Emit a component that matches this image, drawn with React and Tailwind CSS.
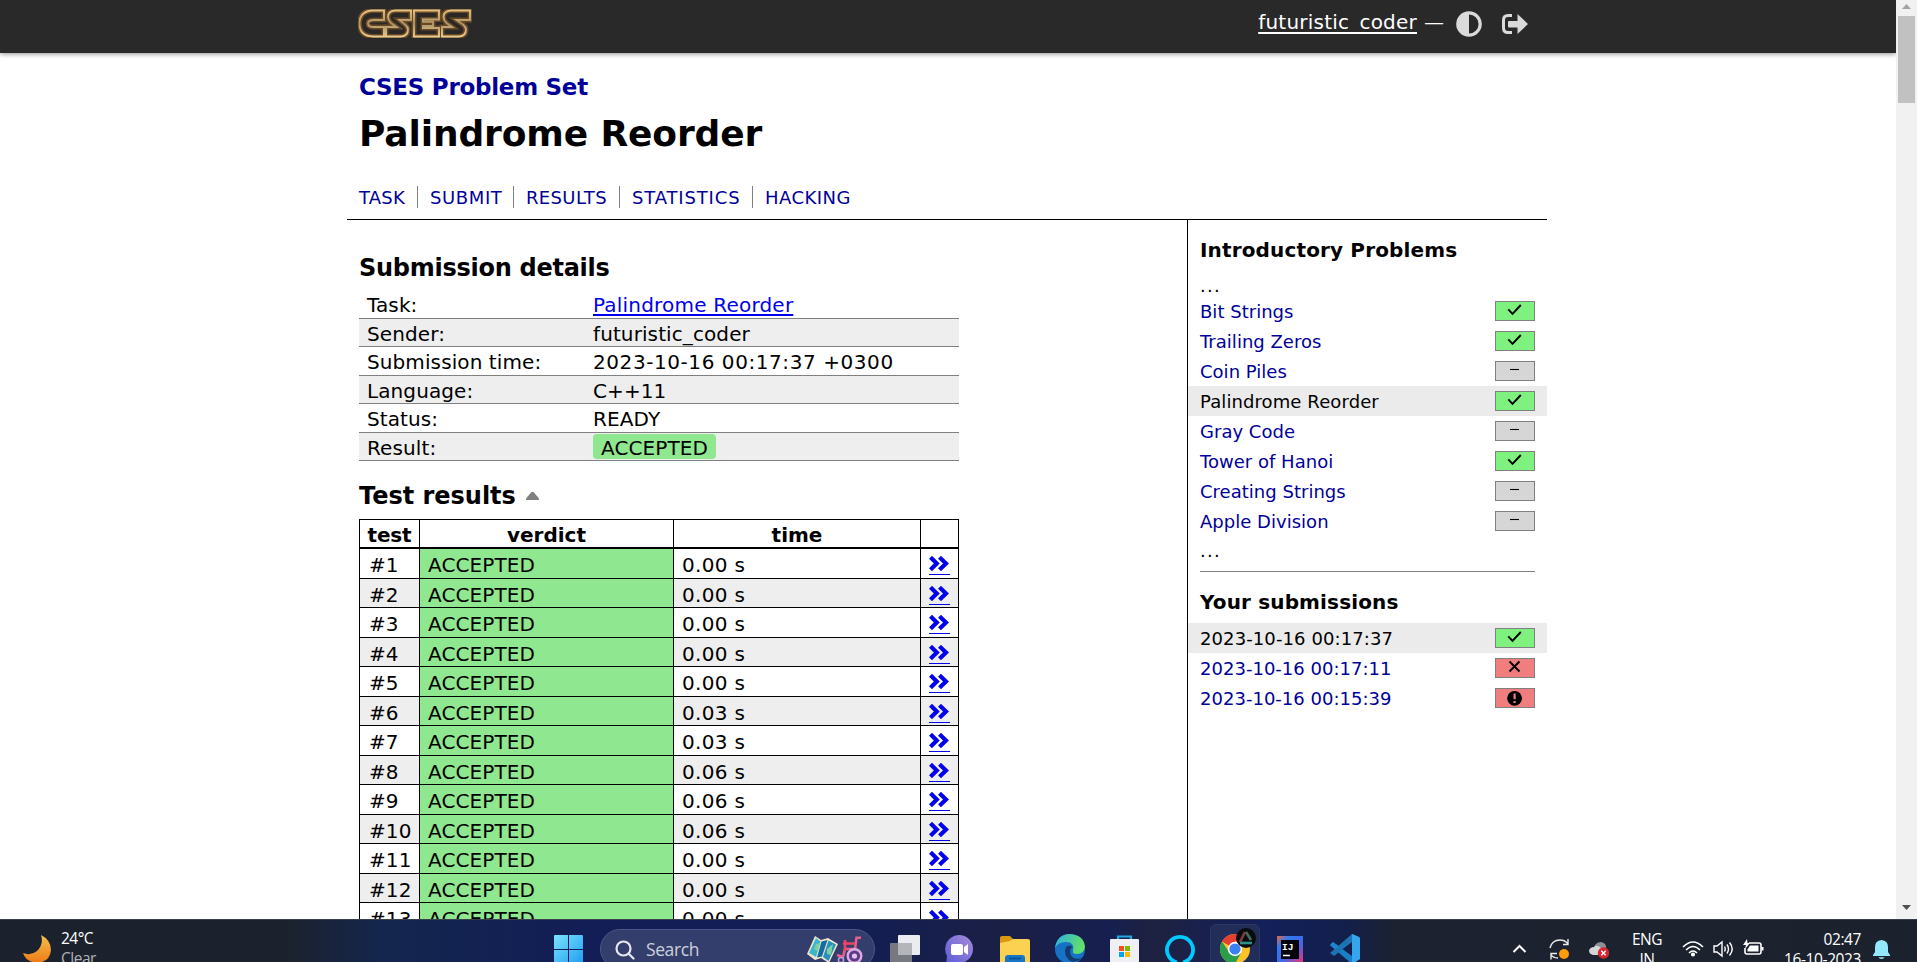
import React from "react";
import clsx from "clsx";

/* ---------- data ---------- */

const tabs = [
  { label: "TASK", box: "w-[59px] pl-0", spacing: "tracking-[0.2px]" },
  { label: "SUBMIT", box: "w-[96px] pl-[12px]", spacing: "tracking-[0.6px]" },
  { label: "RESULTS", box: "w-[106px] pl-[12px]", spacing: "tracking-[0.35px]" },
  { label: "STATISTICS", box: "w-[133px] pl-[12px]", spacing: "tracking-[0.85px]" },
  { label: "HACKING", box: "pl-[12px]", spacing: "tracking-[0.45px]" },
];

const details = [
  { label: "Task:", value: "Palindrome Reorder", kind: "link", h: "h-[29px]" },
  { label: "Sender:", value: "futuristic_coder", h: "h-[28px]" },
  { label: "Submission time:", value: "2023-10-16 00:17:37 +0300", kind: "time", h: "h-[29px]" },
  { label: "Language:", value: "C++11", h: "h-[28px]" },
  { label: "Status:", value: "READY", h: "h-[29px]" },
  { label: "Result:", value: "ACCEPTED", kind: "badge", h: "h-[28px]" },
];

const times = [
  "0.00 s", "0.00 s", "0.00 s", "0.00 s", "0.00 s", "0.03 s", "0.03 s",
  "0.06 s", "0.06 s", "0.06 s", "0.00 s", "0.00 s", "0.00 s",
];

const problems = [
  { name: "Bit Strings", state: "ok" },
  { name: "Trailing Zeros", state: "ok" },
  { name: "Coin Piles", state: "none" },
  { name: "Palindrome Reorder", state: "ok", current: true },
  { name: "Gray Code", state: "none" },
  { name: "Tower of Hanoi", state: "ok" },
  { name: "Creating Strings", state: "none" },
  { name: "Apple Division", state: "none" },
];

const submissions = [
  { name: "2023-10-16 00:17:37", state: "ok", current: true },
  { name: "2023-10-16 00:17:11", state: "fail" },
  { name: "2023-10-16 00:15:39", state: "error" },
];

/* ---------- page icons ---------- */

function Logo() {
  const letters = [
    "M26 1.500H15Q1.500 2 1.500 14.500Q1.500 27 15 27.500H26V18H16Q10 18 10 14.500Q10 11 16 11H26Z",
    "M53 1.500H37Q30 2 30 8Q30 11 33 14L38.500 18H28V27.500H43Q50 27 50 20.500Q50 18 47 15.500L41.500 11H53Z",
    "M56 1.500H81V10.500H65V12.700H75V17H65V19H81V27.500H56Z",
    "M112 1.500H93Q85.500 2 85.500 8Q85.500 11 88.500 14L94 18H84V27.500H101Q108 27 108 20.500Q108 18 105 15.500L98.500 11H112Z",
  ];
  return (
    <svg className="h-[29px] w-[114px]" viewBox="0 0 114 29" fill="none">
      <defs>
        <linearGradient id="gold" x1="0" y1="0" x2="0" y2="1">
          <stop offset="0" stopColor="#e3c184" />
          <stop offset="0.5" stopColor="#ab9468" />
          <stop offset="1" stopColor="#e8cd92" />
        </linearGradient>
      </defs>
      {letters.map((d) => (
        <g key={d}>
          <path d={d} fill="#292827" stroke="#6b4824" strokeWidth="5" />
        </g>
      ))}
      {letters.map((d) => (
        <path key={d} d={d} stroke="url(#gold)" strokeWidth="1.900" />
      ))}
    </svg>
  );
}

function Contrast() {
  return (
    <svg className="h-[26px] w-[26px]" viewBox="0 0 26 26">
      <circle cx="13" cy="13" r="11.200" fill="none" stroke="#dadada" strokeWidth="3.200" />
      <path d="M13 1.500A11.500 11.500 0 0 0 13 24.500Z" fill="#dadada" />
    </svg>
  );
}

function SignOut() {
  return (
    <svg className="h-[20px] w-[26px]" viewBox="0 0 26 20">
      <path d="M10 1.500H6Q1.500 1.500 1.500 6V14Q1.500 18.500 6 18.500H10" fill="none" stroke="#dadada" strokeWidth="3" />
      <path d="M7 7H15.500V0L26 10L15.500 20V13.500H7Q6 13.500 6 12.500V8Q6 7 7 7Z" fill="#dadada" />
    </svg>
  );
}

function DoubleChevron() {
  return (
    <svg className="h-[15px] w-[20px]" viewBox="0 0 20 15" fill="none" stroke="#0000ee" strokeWidth="4.200">
      <path d="M1.500 1.300L7.800 7.500L1.500 13.700M10.500 1.300L17 7.500L10.500 13.700" />
    </svg>
  );
}

function StateBadge({ state }) {
  return (
    <span
      className={clsx(
        "flex h-[20px] w-[40px] justify-center border border-[#808080]",
        state === "ok" && "bg-[#7ef17e]",
        state === "none" && "bg-[#d6d6d6]",
        (state === "fail" || state === "error") && "bg-[#f17e7e]"
      )}
    >
      <svg className="h-[18px] w-[18px]" viewBox="0 0 18 18" fill="none" stroke="#000">
        {state === "ok" && <path d="M2.300 7.300L6.500 11.800L14.800 3" strokeWidth="1.900" />}
        {state === "none" && <path d="M4 7.500H13" strokeWidth="1.100" />}
        {state === "fail" && <path d="M3.500 2.500L13.500 12.500M13.500 2.500L3.500 12.500" strokeWidth="1.900" />}
        {state === "error" && (
          <g>
            <circle cx="8.600" cy="9.300" r="7.400" fill="#000" stroke="none" />
            <path d="M8.600 4.500V10.200M8.600 12V14" stroke="#f17e7e" strokeWidth="2.200" />
          </g>
        )}
      </svg>
    </span>
  );
}

/* ---------- page sections ---------- */

function Header() {
  return (
    <header className="z-10 flex h-[53px] shrink-0 bg-[#292929] shadow-[0_1px_5px_rgba(0,0,0,0.45)]">
      <div className="ml-[358px] flex w-[1170px] justify-between">
        <div className="pt-[9px]">
          <Logo />
        </div>
        <div className="flex text-[20px] leading-[44px] text-white">
          <span className="tracking-[0.22px] underline decoration-2 underline-offset-[3px]">futuristic_coder</span>
          <span className="ml-[7px] w-[32px]">—</span>
          <span className="pt-[11px]">
            <Contrast />
          </span>
          <span className="ml-[20px] pt-[14px]">
            <SignOut />
          </span>
        </div>
      </div>
    </header>
  );
}

function TitleBlock() {
  return (
    <div className="h-[167px] border-b border-black pl-[12px] pt-[18px]">
      <h4 className="h-[32px] text-[23px] font-bold leading-[32px] tracking-[-0.27px] text-[#000099]">CSES Problem Set</h4>
      <h1 className="h-[62px] text-[36px] font-bold leading-[61px] tracking-[-0.12px]">Palindrome Reorder</h1>
      <nav className="mt-[21px] flex text-[18px] leading-[24px] text-[#000099]">
        {tabs.map((t, i) => (
          <span
            key={t.label}
            className={clsx("h-[22px]", t.box, t.spacing, i < tabs.length - 1 && "border-r border-[#808080]")}
          >
            {t.label}
          </span>
        ))}
      </nav>
    </div>
  );
}

function Details() {
  return (
    <div className="w-[600px] text-[20px] leading-[30px]">
      {details.map((d, i) => {
        const drop = i % 2 === 1 ? "pt-[3px]" : "pt-px";
        return (
          <div
            key={d.label}
            className={clsx("flex items-center border-b border-[#808080] pl-[8px]", d.h, i % 2 === 1 && "bg-[#eeeeee]")}
          >
            <span className={clsx("w-[226px] tracking-[0.1px]", drop)}>{d.label}</span>
            {d.kind === "link" && (
              <span className={clsx("tracking-[0.2px] text-[#0000ee] underline decoration-2 underline-offset-[2px]", drop)}>
                {d.value}
              </span>
            )}
            {d.kind === "badge" && (
              <span className="h-[25px] w-[123px] rounded-[4px] bg-[#8fe88f] pl-[8px] leading-[28px] tracking-[0.1px]">
                {d.value}
              </span>
            )}
            {d.kind === "time" && <span className={clsx("tracking-[0.57px]", drop)}>{d.value}</span>}
            {!d.kind && <span className={clsx("tracking-[0.1px]", drop)}>{d.value}</span>}
          </div>
        );
      })}
    </div>
  );
}

function Results() {
  return (
    <div className="w-[600px] border border-black text-[20px]">
      <div className="grid h-[29px] grid-cols-[60px_254px_247px_37px] grid-rows-1 border-b-2 border-black text-center font-bold leading-[30px]">
        <span className="border-r border-black tracking-[-0.2px]">test</span>
        <span className="border-r border-black">verdict</span>
        <span className="border-r border-black">time</span>
        <span />
      </div>
      {times.map((t, i) => (
        <div
          key={i}
          className={clsx(
            "grid grid-cols-[60px_254px_247px_37px] grid-rows-1 border-b border-black leading-[32px]",
            i % 2 === 0 ? "h-[30px]" : "h-[29px] bg-[#eeeeee]"
          )}
        >
          <span className="border-r border-black pl-[9px] tracking-[0.1px]">#{i + 1}</span>
          <span className="border-r border-black bg-[#8fe88f] pl-[8px] tracking-[0.1px]">ACCEPTED</span>
          <span className="border-r border-black pl-[8px] tracking-[0.3px]">{t}</span>
          <span className="pl-[8px] pt-[7px]">
            <span className="flex h-[19px] w-[21px] border-b border-[#0000ee]">
              <DoubleChevron />
            </span>
          </span>
        </div>
      ))}
    </div>
  );
}

function SideRow({ item }) {
  return (
    <div className={clsx("flex h-[30px] items-center justify-between pl-[12px] pr-[12px]", item.current ? "bg-[#ebebeb]" : "text-[#000099]")}>
      <span className={clsx("pt-[2px] leading-[30px]", item.current ? "tracking-[0.1px]" : "tracking-[0.02px]")}>{item.name}</span>
      <StateBadge state={item.state} />
    </div>
  );
}

function Sidebar() {
  return (
    <aside className="w-[360px] border-l border-black text-[18px]">
      <h4 className="mt-[14px] h-[33px] pl-[12px] text-[20px] font-bold leading-[33px] tracking-[0.15px]">Introductory Problems</h4>
      <div className="mt-[3px] h-[26px] pl-[12px] leading-[32px] tracking-[1.3px]">...</div>
      {problems.map((p) => (
        <SideRow key={p.name} item={p} />
      ))}
      <div className="mx-[12px] h-[36px] border-b border-[#808080] leading-[29px] tracking-[1.3px]">...</div>
      <h4 className="mt-[14px] h-[37px] pl-[12px] text-[20px] font-bold leading-[32px] tracking-[0.15px]">Your submissions</h4>
      {submissions.map((s) => (
        <SideRow key={s.name} item={s} />
      ))}
    </aside>
  );
}

function Scrollbar() {
  return (
    <div className="flex w-[21px] shrink-0 flex-col items-center justify-between bg-[#f1f1f1] pb-[9px] pt-[4px]">
      <div className="flex flex-col items-center">
        <svg className="h-[5px] w-[9px]" viewBox="0 0 9 5">
          <path d="M0 5L4.500 0L9 5Z" fill="#a3a3a3" />
        </svg>
        <div className="mt-[7px] h-[87px] w-[17px] bg-[#c1c1c1]" />
      </div>
      <svg className="h-[5px] w-[9px]" viewBox="0 0 9 5">
        <path d="M0 0H9L4.500 5Z" fill="#505050" />
      </svg>
    </div>
  );
}

/* ---------- taskbar ---------- */

function TaskIcon({ children, className }) {
  return (
    <svg className={clsx("h-[30px] w-[30px] shrink-0", className)} viewBox="0 0 30 30" fill="none">
      {children}
    </svg>
  );
}

function SearchPill() {
  return (
    <div className="ml-[16px] mt-[9px] flex h-[40px] w-[275px] shrink-0 rounded-full border border-[#4d5688] bg-[#343e6c] pl-[14px]">
      <svg className="mt-[10px] h-[20px] w-[20px]" viewBox="0 0 20 20" fill="none" stroke="#e6e7ee" strokeWidth="2.200">
        <circle cx="8.500" cy="8.500" r="7" />
        <path d="M13.500 13.500L18.500 18.500" strokeLinecap="round" />
      </svg>
      <span className="ml-[11px] w-[161px] font-['Open_Sans','Noto_Sans',sans-serif] text-[17.500px] leading-[39px] tracking-[-0.4px] text-[#cdd0dd]">
        Search
      </span>
      <svg className="mt-[6px] h-[30px] w-[56px]" viewBox="0 0 56 30" fill="none">
        <path d="M8 0L14 4L21 2L31 8L22 27L14 22L8 24L0 18Z" fill="#f2e6cf" />
        <path d="M9 2L13.500 5.500L9 21L2 17Z" fill="#3cb6c9" />
        <path d="M14.500 5.500L20.500 4L15 20.500L10 21.500Z" fill="#136ca4" />
        <path d="M21.500 4.500L29 8.500L21.500 25L16 21Z" fill="#2790bd" />
        <path d="M9 8L13 7L11 15L7 13ZM20 13L26 8L24 19L20 18Z" fill="#7ed0a0" />
        <path d="M54 1.800H49.500L48 13H38L36 21L30 19" stroke="#e85f87" strokeWidth="2.600" />
        <path d="M36 7.500H48M38 4V15" stroke="#ee4565" strokeWidth="2.600" />
        <circle cx="47.500" cy="20" r="6.800" fill="#5a3d86" stroke="#dcaae6" strokeWidth="2.400" />
        <circle cx="47.500" cy="20" r="2.600" fill="#e8c1ef" />
        <circle cx="34" cy="24" r="2.600" stroke="#c59ae0" strokeWidth="1.500" />
      </svg>
    </div>
  );
}

function Taskbar() {
  return (
    <footer className="flex h-[43px] shrink-0 overflow-hidden border-t border-[#3b414c] bg-[linear-gradient(90deg,#1c222d_0%,#1c222d_15%,#14264e_20%,#121e55_30%,#121e55_44%,#1a1f45_52%,#161f50_58%,#1e2140_60%,#13205a_66%,#131f4c_70%,#1c222f_73%,#1c222d_100%)] font-['Open_Sans','Noto_Sans',sans-serif]">
      <svg className="ml-[23px] mt-[14px] h-[29px] w-[29px] shrink-0" viewBox="0 0 29 29">
        <defs>
          <linearGradient id="moon" x1="0" y1="0" x2="0" y2="1">
            <stop offset="0" stopColor="#f4c04e" />
            <stop offset="1" stopColor="#ee7a16" />
          </linearGradient>
        </defs>
        <path d="M18 1Q28 6 28 16Q27 28 14 29Q3 28 0 19Q8 22 14 17Q21 10 18 1Z" fill="url(#moon)" />
      </svg>
      <div className="ml-[9px] w-[101px] shrink-0 pt-[8px] text-[15.500px] leading-[20px] tracking-[-0.5px] text-white">
        <div>24°C</div>
        <div className="text-[#aeb1b7]">Clear</div>
      </div>

      <TaskIcon className="ml-[392px] mt-[15px]">
        <defs>
          <linearGradient id="win" x1="0" y1="0" x2="1" y2="1">
            <stop offset="0" stopColor="#7ae3fb" />
            <stop offset="1" stopColor="#1f9df2" />
          </linearGradient>
        </defs>
        <path d="M0 1Q0 0 1 0H14V14H0ZM15 0H28Q29 0 29 1V14H15ZM0 15H14V29H0ZM15 15H29V29H15Z" fill="url(#win)" />
      </TaskIcon>
      <SearchPill />
      <TaskIcon className="ml-[15px] mt-[15px]">
        <rect x="8" y="0" width="22" height="20" rx="1" fill="#ebecef" />
        <rect x="0" y="8" width="22" height="20" rx="1" fill="#777980" />
        <rect x="8" y="8" width="14" height="12" fill="#b3b5ba" />
      </TaskIcon>
      <TaskIcon className="ml-[25px] mt-[15px]">
        <defs>
          <linearGradient id="chat" x1="0" y1="1" x2="1" y2="0">
            <stop offset="0" stopColor="#5b5bd8" />
            <stop offset="1" stopColor="#a58bd8" />
          </linearGradient>
        </defs>
        <path d="M14 0A14 14 0 0 1 14 28L1 30L2 21A14 14 0 0 1 14 0Z" fill="url(#chat)" />
        <rect x="6" y="9" width="12" height="11" rx="2" fill="#fff" />
        <path d="M19 12L23 9V20L19 17Z" fill="#fff" />
      </TaskIcon>
      <TaskIcon className="ml-[25px] mt-[16px]">
        <path d="M0 2Q0 0 2 0H10L13 3H28V9H0Z" fill="#d99a11" />
        <path d="M0 7L10 5L13 3H28Q30 3 30 5V30H0Z" fill="#fcd152" />
        <path d="M5 30V22Q5 19 8 19H22Q25 19 25 22V30Z" fill="#1676c4" />
        <path d="M9 22.500H21" stroke="#0a4f91" strokeWidth="1.500" />
      </TaskIcon>
      <TaskIcon className="ml-[25px] mt-[14px]">
        <defs>
          <linearGradient id="edge" x1="0" y1="0" x2="1" y2="0.300">
            <stop offset="0" stopColor="#2cb0e5" />
            <stop offset="1" stopColor="#63df6a" />
          </linearGradient>
        </defs>
        <circle cx="15" cy="15" r="15" fill="#1572c5" />
        <path d="M0 14Q2 0 15 0Q29 1 30 13Q29 20 22 20Q17 20 18 17Q20 8 11 8Q3 8 0 14Z" fill="url(#edge)" />
        <path d="M11 13Q8 20 14 26Q19 30 27 24Q16 27 15 18Q15 14 18 13Q14 10 11 13Z" fill="#153a6c" />
      </TaskIcon>
      <TaskIcon className="ml-[25px] mt-[15px]">
        <path d="M8 5V1.500H21V5" stroke="#27a6e6" strokeWidth="2.200" />
        <path d="M0 5Q0 4 1 4H28Q29 4 29 5V30H0Z" fill="#eef0f3" />
        <path d="M9 11H14V16H9Z" fill="#f25022" />
        <path d="M15 11H20V16H15Z" fill="#7fba00" />
        <path d="M9 17H14V22H9Z" fill="#00a4ef" />
        <path d="M15 17H20V22H15Z" fill="#ffb900" />
      </TaskIcon>
      <TaskIcon className="ml-[25px] mt-[14px]">
        <path d="M12 28.500A13 13 0 1 1 18 28.500" stroke="#00caff" strokeWidth="3.800" />
      </TaskIcon>
      <div className="ml-[15px] mt-[4px] h-[50px] w-[50px] shrink-0 rounded-[6px] border border-[#2d3763] bg-[#232d59] pl-[9px] pt-[3px]">
        <svg className="h-[36px] w-[38px]" viewBox="0 0 38 36">
          <circle cx="15" cy="21" r="15" fill="#fbc22c" />
          <path d="M15 21L2 13.500A15 15 0 0 1 28 13.500H15Z" fill="#e63e30" />
          <path d="M2 13.500A15 15 0 0 0 15 36L21 25L15 21L9 24Z" fill="#2b9e4b" />
          <circle cx="15" cy="21" r="7.200" fill="#fff" />
          <circle cx="15" cy="21" r="5.600" fill="#3c7ff0" />
          <circle cx="26" cy="10" r="10" fill="#080b0c" />
          <path d="M25 4L20 14" stroke="#7d3a45" strokeWidth="2.600" />
          <path d="M26 4L31 12" stroke="#3f6f5a" strokeWidth="2.600" />
          <path d="M20 15H32" stroke="#2c9188" strokeWidth="2.600" />
        </svg>
      </div>
      <svg className="ml-[17px] mt-[16px] h-[26px] w-[26px] shrink-0" viewBox="0 0 26 26">
        <defs>
          <linearGradient id="ij" x1="0" y1="0" x2="1" y2="1">
            <stop offset="0" stopColor="#f2613d" />
            <stop offset="0.250" stopColor="#2f7af0" />
            <stop offset="0.600" stopColor="#4565e8" />
            <stop offset="1" stopColor="#ee3275" />
          </linearGradient>
        </defs>
        <rect width="26" height="26" fill="url(#ij)" />
        <rect x="4" y="4" width="18" height="19" fill="#07030c" />
        <text x="5" y="14" fill="#fff" fontSize="9.500" fontWeight="700" fontFamily="Liberation Mono, monospace">IJ</text>
        <path d="M6 19.500H13" stroke="#fff" strokeWidth="1.500" />
      </svg>
      <TaskIcon className="ml-[27px] mt-[14px]">
        <path d="M22 0L29 3Q30 4 30 5V25L22 30L2 13L0 11L3 8L22 22Z" fill="#1a80c4" />
        <path d="M0 19L22 0V8L4 22Z" fill="#1c74b4" />
        <path d="M22 0L29 3Q30 4 30 5V25L22 30Z" fill="#35a6ee" />
        <path d="M22 8.500V21.500L13 15Z" fill="#131f4c" />
        <path d="M0 11L3 8L9 12.500L5 15Z" fill="#1f86cc" />
      </TaskIcon>

      <svg className="ml-[152px] mt-[23px] h-[11px] w-[15px] shrink-0" viewBox="0 0 15 11" fill="none">
        <path d="M1.500 9L7.500 3L13.500 9" stroke="#fff" strokeWidth="2" />
      </svg>
      <svg className="ml-[22px] mt-[18px] h-[24px] w-[22px] shrink-0" viewBox="0 0 22 24" fill="none">
        <path d="M1 10Q3 2 11 2Q16 2 19 6M19 1V6.500H14M9 20Q4 20 2 16.500M2 21.500V15.500H8" stroke="#e9eaec" strokeWidth="1.400" />
        <circle cx="15" cy="16" r="5" fill="#ff9a0c" />
      </svg>
      <svg className="ml-[18px] mt-[21px] h-[20px] w-[21px] shrink-0" viewBox="0 0 21 20">
        <path d="M5 12Q4 1 12 1Q17 2 17 6L18 12Z" fill="#8c8f94" />
        <path d="M4 14Q0 13 0 9.500Q1 6 5 6Q8 3 12 7L16 10L12 14Z" fill="#d4d5d8" />
        <circle cx="14.500" cy="12" r="5.700" fill="#d9252d" />
        <path d="M12.300 9.800L16.700 14.200M16.700 9.800L12.300 14.200" stroke="#fff" strokeWidth="1.400" />
      </svg>
      <div className="ml-[19px] w-[36px] shrink-0 pt-[9px] text-center text-[15.500px] leading-[20px] tracking-[-0.5px] text-white">
        <div>ENG</div>
        <div>IN</div>
      </div>
      <svg className="ml-[17px] mt-[20px] h-[18px] w-[22px] shrink-0" viewBox="0 0 22 18" fill="none" stroke="#fff" strokeWidth="1.600">
        <path d="M1 7Q11 -3 21 7M4 10Q11 3 18 10M7 13Q11 9 15 13" />
        <circle cx="11" cy="14.500" r="1.300" fill="#fff" />
      </svg>
      <svg className="ml-[9px] mt-[20px] h-[18px] w-[21px] shrink-0" viewBox="0 0 21 18" fill="none" stroke="#fff" strokeWidth="1.400">
        <path d="M1 6H4L9 2V16L4 12H1Z" />
        <path d="M11.500 6.500Q13 9 11.500 11.500M14 4.500Q17 9 14 13.500M16.500 2.500Q22 9 16.500 15.500" />
      </svg>
      <svg className="ml-[9px] mt-[19px] h-[18px] w-[21px] shrink-0" viewBox="0 0 21 18" fill="none">
        <path d="M6 4H16Q18 4 18 6V13Q18 15 16 15H4Q2 15 2 13V9" stroke="#fff" strokeWidth="1.600" />
        <path d="M7 6.500H15.500V12.500H4.500V10.500Z" fill="#fff" />
        <path d="M18.500 8H20.500V11.500H18.500Z" fill="#fff" />
        <path d="M4 0L0 6H3L2 10L7 4H4.500Z" fill="#fff" />
      </svg>
      <div className="ml-[10px] w-[87px] shrink-0 pt-[9px] text-right text-[15.500px] leading-[20px] tracking-[-0.400px] text-white">
        <div>02:47</div>
        <div>16-10-2023</div>
      </div>
      <svg className="ml-[12px] mt-[20px] h-[20px] w-[17px] shrink-0" viewBox="0 0 17 20">
        <path d="M8.500 0Q15 0.500 15 7V12L17 15V16H0V15L2 12V7Q2 0.500 8.500 0ZM5.500 17.200H11.500Q11 19 8.500 19Q6 19 5.500 17.200Z" fill="#94e8fc" />
      </svg>
    </footer>
  );
}

export default function App() {
  return (
    <div className="flex h-[962px] w-[1917px] flex-col overflow-hidden bg-white font-['DejaVu_Sans','Verdana',sans-serif] text-black">
      <div className="flex h-[919px] shrink-0 overflow-hidden">
        <div className="flex w-[1896px] shrink-0 flex-col overflow-hidden">
          <Header />
          <div className="ml-[347px] w-[1200px]">
            <TitleBlock />
            <div className="flex h-[699px]">
              <main className="w-[840px] overflow-hidden pl-[12px]">
                <h2 className="mt-[32px] h-[38px] text-[24px] font-bold leading-[32px] tracking-[-0.27px]">Submission details</h2>
                <Details />
                <h2 className="flex h-[58px] items-center pt-[12px] text-[24px] font-bold leading-[34px] tracking-[-0.02px]">
                  <span>Test results</span>
                  <svg className="ml-[10px] h-[8px] w-[13px]" viewBox="0 0 13 8">
                    <path d="M0 8V6.500L5.500 0H7.500L13 6.500V8Z" fill="#808080" />
                  </svg>
                </h2>
                <Results />
              </main>
              <Sidebar />
            </div>
          </div>
        </div>
        <Scrollbar />
      </div>
      <Taskbar />
    </div>
  );
}
